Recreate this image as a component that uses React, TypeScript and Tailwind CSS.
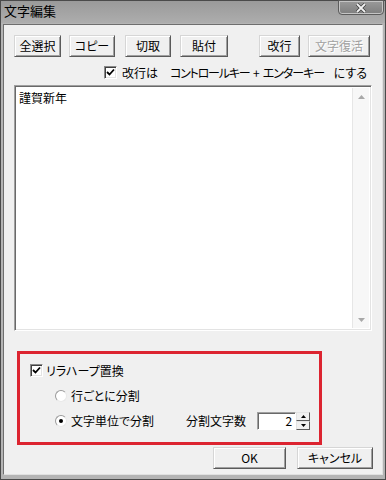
import type { ReactNode } from 'react'

const font = "font-['Noto_Sans_CJK_JP','Liberation_Sans',sans-serif] [font-feature-settings:'palt']"

function Btn({ className, children, disabled }: { className: string; children: ReactNode; disabled?: boolean }) {
  return (
    <div
      className={`h-[22px] shrink-0 whitespace-nowrap flex items-center justify-center border border-t-[#d6d6d6] border-l-[#d6d6d6] border-b-[#5a5a5a] border-r-[#5a5a5a] bg-[#f0f0f0] shadow-[inset_1px_1px_0_#ffffff,inset_-1px_-1px_0_#a0a0a0] text-[12px] leading-none ${
        disabled ? 'text-[#a0a0a0] [text-shadow:1px_1px_0_#ffffff]' : 'text-black'
      } ${className}`}
    >
      {children}
    </div>
  )
}

function CheckBox() {
  return (
    <div className="w-[13px] h-[13px] shrink-0 bg-white border border-t-[#8a8a8a] border-l-[#8a8a8a] border-b-[#ffffff] border-r-[#ffffff] shadow-[inset_1px_1px_0_#404040,inset_-1px_-1px_0_#e3e3e3] flex items-center justify-center">
      <svg width="9" height="9" viewBox="0 0 9 9">
        <path d="M1 4 L3.5 6.5 L8 1.5" stroke="#000" strokeWidth="1.8" fill="none" />
      </svg>
    </div>
  )
}

function Radio({ checked }: { checked?: boolean }) {
  return (
    <div className="w-[12px] h-[12px] shrink-0 rounded-full bg-white border border-t-[#9a9a9a] border-l-[#9a9a9a] border-b-[#e8e8e8] border-r-[#e8e8e8] flex items-center justify-center">
      {checked && <div className="w-[4px] h-[4px] rounded-full bg-black" />}
    </div>
  )
}

export default function App() {
  return (
    <div className={`w-[386px] h-[480px] bg-[#b4b4b4] border border-[#4a4a4a] flex flex-col ${font}`}>
      {/* Title bar */}
      <div className="h-[22px] shrink-0 flex items-start justify-between bg-gradient-to-b from-[#9a9a9a] to-[#adadad]">
        <span className="mt-[3px] ml-[3px] text-[13px] leading-[14px] text-black">文字編集</span>
        <div className="w-[46px] h-[15px] -mt-px mr-px rounded-b-[4px] border border-[#5c5c5c] bg-gradient-to-b from-[#9a9a9a] to-[#7e7e7e] shadow-[inset_0_0_0_1px_#c4c4c4] flex items-center justify-center">
          <svg width="12" height="10" viewBox="0 0 12 10">
            <path d="M2 1 L10 9 M10 1 L2 9" stroke="#3a3a3a" strokeWidth="3.2" />
            <path d="M2 1 L10 9 M10 1 L2 9" stroke="#f2f2f2" strokeWidth="1.8" />
          </svg>
        </div>
      </div>

      {/* Client area */}
      <div className="ml-[2px] mr-[2px] mt-px h-[451px] bg-[#f0f0f0] border-t border-l border-[#6e6e6e] border-b border-r border-b-[#e0e0e0] border-r-[#e0e0e0] flex flex-col">
        {/* Buttons */}
        <div className="mt-[10px] ml-[10px] flex items-center">
          <Btn className="w-[47px]">全選択</Btn>
          <Btn className="w-[46px] ml-[8px]">コピー</Btn>
          <Btn className="w-[46px] ml-[10px]">切取</Btn>
          <Btn className="w-[48px] ml-[9px]">貼付</Btn>
          <Btn className="w-[41px] ml-[31px]">改行</Btn>
          <Btn className="w-[62px] ml-[8px]" disabled>文字復活</Btn>
        </div>

        {/* Option row */}
        <div className="mt-[9px] ml-[100px] h-[13px] flex items-center whitespace-nowrap text-[12px] leading-none text-black">
          <CheckBox />
          <span className="ml-[5px] w-[34px] shrink-0">改行は</span>
          <span className="ml-[14px] w-[78px] shrink-0 tracking-[-1.2px]">コントロールキー</span>
          <span className="ml-[5px] shrink-0">+</span>
          <span className="ml-[3px] w-[60px] shrink-0 tracking-[-1px]">エンターキー</span>
          <span className="ml-[11px] shrink-0">にする</span>
        </div>

        {/* Text area */}
        <div className="mt-[6px] ml-[10px] w-[358px] h-[246px] bg-white border border-t-[#a0a0a0] border-l-[#a0a0a0] border-b-[#ffffff] border-r-[#ffffff] shadow-[inset_1px_1px_0_#696969,inset_-1px_-1px_0_#e3e3e3] flex">
          <div className="flex-1 pt-[5px] pl-[4px] text-[12px] leading-[14px] text-black">謹賀新年</div>
          <div className="w-[17px] my-[2px] mr-[2px] bg-[#f7f7f7] border-l border-[#e6e6e6] flex flex-col justify-between">
            <div className="h-[17px] flex items-center justify-center">
              <svg width="7" height="4" viewBox="0 0 7 4">
                <path d="M0 4 L3.5 0 L7 4 Z" fill="#a8a8a8" />
              </svg>
            </div>
            <div className="h-[17px] flex items-center justify-center">
              <svg width="7" height="4" viewBox="0 0 7 4">
                <path d="M0 0 L3.5 4 L7 0 Z" fill="#a8a8a8" />
              </svg>
            </div>
          </div>
        </div>

        {/* Highlighted options */}
        <div className="mt-[20px] ml-[13px] w-[305px] h-[94px] border-[3px] border-[#dc2430] flex flex-col whitespace-nowrap text-[12px] leading-none text-black">
          <div className="mt-[10px] ml-[10px] h-[13px] flex items-center">
            <CheckBox />
            <span className="ml-[3px]">リラハープ置換</span>
          </div>
          <div className="mt-[13px] ml-[35px] h-[12px] flex items-center">
            <Radio />
            <span className="ml-[4px]">行ごとに分割</span>
          </div>
          <div className="mt-[10px] ml-[35px] h-[18px] flex items-center">
            <Radio checked />
            <span className="ml-[4px]">文字単位で分割</span>
            <span className="ml-[32px]">分割文字数</span>
            <div className="ml-[11px] flex h-[18px]">
              <div className="w-[39px] h-[18px] bg-white border border-t-[#a0a0a0] border-l-[#a0a0a0] border-b-[#ffffff] border-r-[#ffffff] shadow-[inset_1px_1px_0_#696969] flex items-center justify-end pr-[3px]">
                2
              </div>
              <div className="w-[14px] h-[18px] flex flex-col">
                <div className="h-[9px] bg-[#f0f0f0] border border-t-[#e3e3e3] border-l-[#e3e3e3] border-b-[#5a5a5a] border-r-[#5a5a5a] flex items-center justify-center">
                  <svg width="5" height="3" viewBox="0 0 5 3">
                    <path d="M0 3 L2.5 0 L5 3 Z" fill="#000" />
                  </svg>
                </div>
                <div className="h-[9px] bg-[#f0f0f0] border border-t-[#e3e3e3] border-l-[#e3e3e3] border-b-[#5a5a5a] border-r-[#5a5a5a] flex items-center justify-center">
                  <svg width="5" height="3" viewBox="0 0 5 3">
                    <path d="M0 0 L2.5 3 L5 0 Z" fill="#000" />
                  </svg>
                </div>
              </div>
            </div>
          </div>
        </div>

        {/* Dialog buttons */}
        <div className="mt-[2px] ml-[209px] flex items-center">
          <Btn className="w-[73px] h-[21px]">OK</Btn>
          <Btn className="w-[76px] h-[21px] ml-[11px]">キャンセル</Btn>
        </div>
      </div>
    </div>
  )
}
